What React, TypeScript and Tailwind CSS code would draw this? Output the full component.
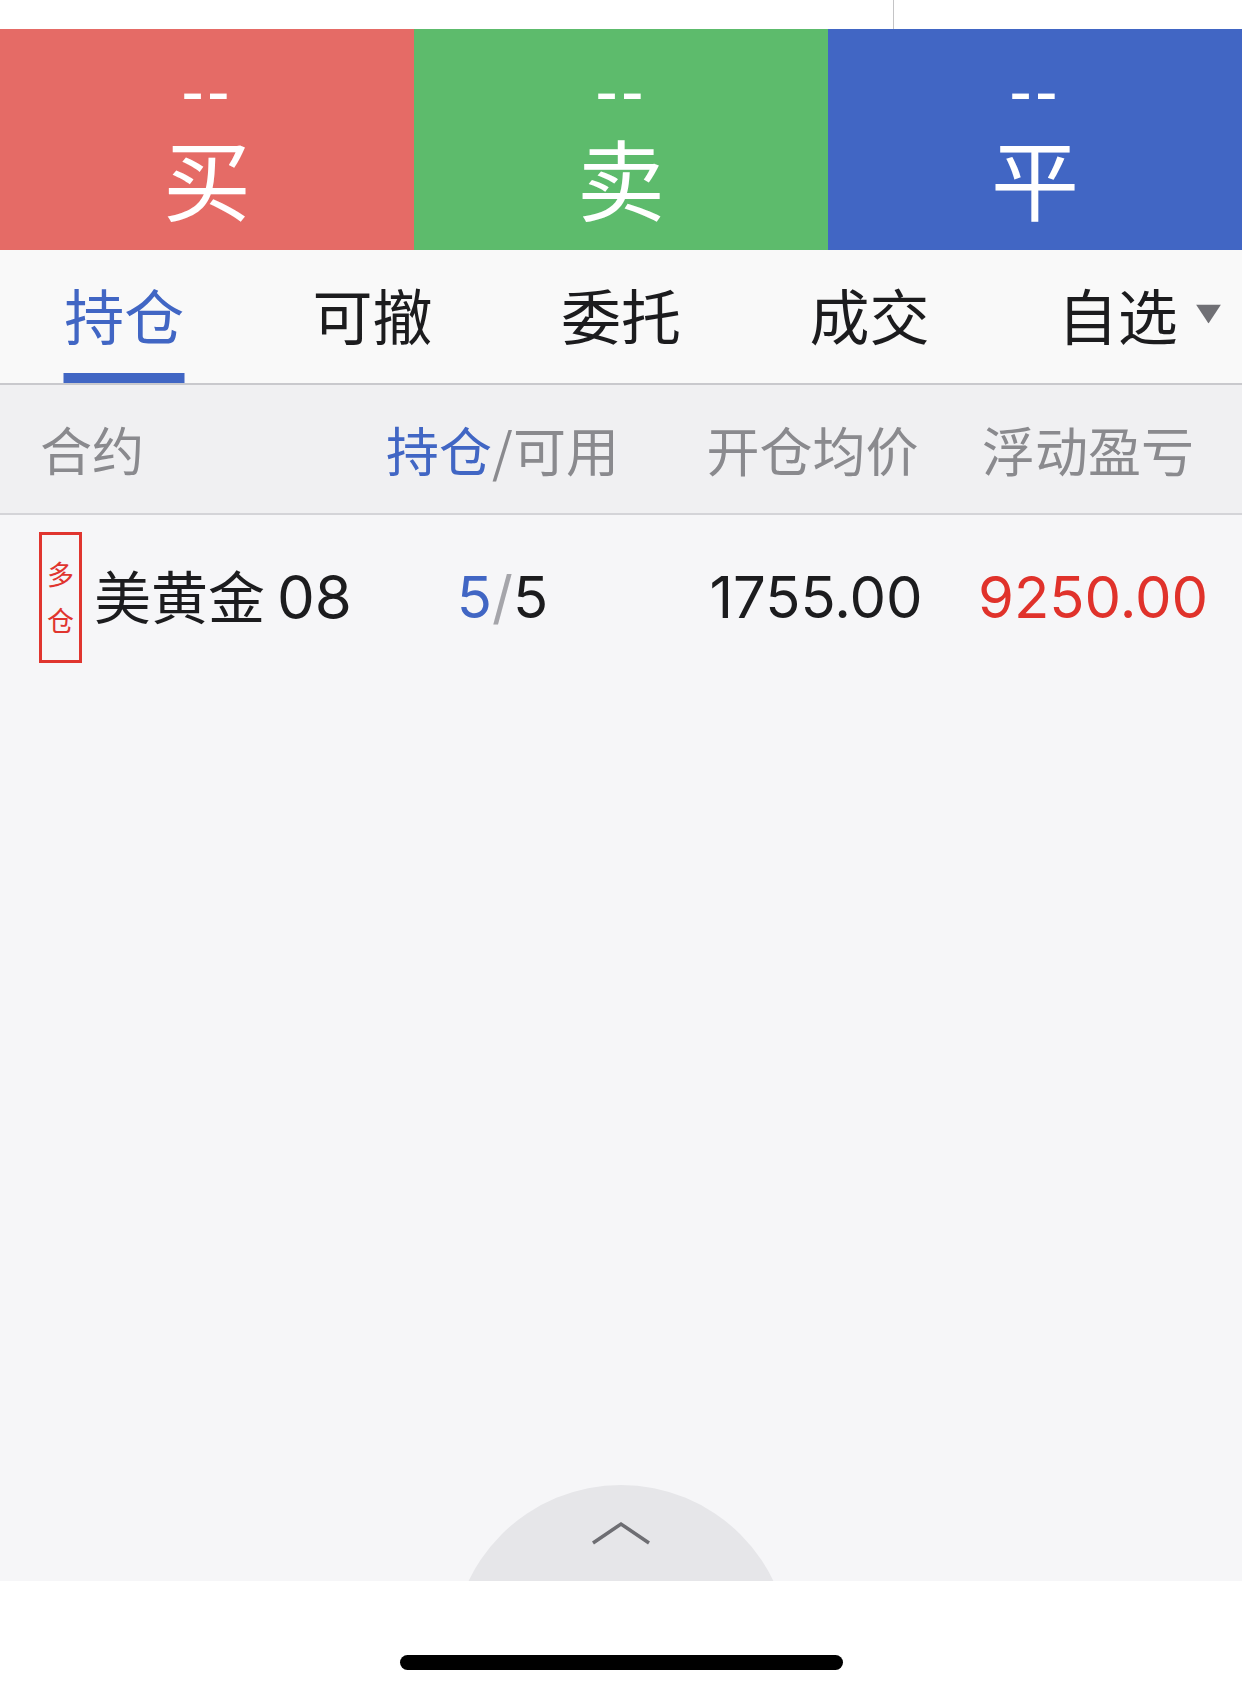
import React from "react";

const CJK = { fontFamily: '"Noto Sans CJK SC", "Noto Sans", sans-serif' };
const MIX = { fontFamily: 'Inter, "Noto Sans CJK SC", sans-serif' };

function ActionCell({ bg, label }: { bg: string; label: string }) {
  return (
    <div className={`flex flex-col items-center pt-[42px] ${bg}`}>
      <div
        className="text-white text-[68px] leading-[40px] h-[40px] tracking-[3px]"
        style={{ fontFamily: '"Liberation Sans", Arial, sans-serif' }}
      >
        --
      </div>
      <div className="text-white text-[88px] leading-none mt-[21px]" style={CJK}>
        {label}
      </div>
    </div>
  );
}

export default function App() {
  const tabs = ["持仓", "可撤", "委托", "成交", "自选"];
  return (
    <div className="w-[1242px] h-[1693px] flex flex-col bg-white overflow-hidden" style={CJK}>
      {/* status strip */}
      <div className="h-[29px] flex bg-white shrink-0">
        <div className="w-[893px]" />
        <div className="w-px bg-[#C4C4C6]" />
      </div>

      {/* action buttons */}
      <div className="grid grid-cols-3 h-[221px] shrink-0">
        <ActionCell bg="bg-[#E56B66]" label="买" />
        <ActionCell bg="bg-[#5DBB6C]" label="卖" />
        <ActionCell bg="bg-[#4166C4]" label="平" />
      </div>

      {/* tabs */}
      <div className="grid grid-cols-5 h-[133px] bg-[#F9F9F9] shrink-0">
        {tabs.map((t, i) => (
          <div key={t} className="relative flex items-center justify-center pb-[5px]">
            <span
              className={`relative text-[60px] leading-none ${
                i === 0 ? "text-[#4166C4]" : "text-[#1C1C1E]"
              }`}
            >
              {t}
              {i === 4 && (
                <svg
                  className="absolute left-full ml-[18px] top-1/2 -translate-y-1/2"
                  width="25"
                  height="19"
                  viewBox="0 0 25 19"
                >
                  <polygon points="0,0 25,0 12.5,19" fill="#707075" />
                </svg>
              )}
            </span>
            {i === 0 && (
              <div className="absolute bottom-0 left-1/2 -translate-x-1/2 w-[121px] h-[10px] bg-[#4166C4]" />
            )}
          </div>
        ))}
      </div>
      <div className="h-[2px] bg-[#C9C9CD] shrink-0" />

      {/* header */}
      <div className="grid grid-cols-[360px_285px_335px_216px] h-[128px] items-center bg-[#F0F0F2] text-[53px] leading-none text-[#8A8A8E] shrink-0">
        <div className="pl-[40px] text-[52px]">合约</div>
        <div className="text-center">
          <span className="text-[#4166C4]">持仓</span>/可用
        </div>
        <div className="text-center">开仓均价</div>
        <div className="text-center">浮动盈亏</div>
      </div>
      <div className="h-[2px] bg-[#D4D4D8] shrink-0" />

      {/* content */}
      <div className="relative flex-1 bg-[#F6F6F8] overflow-hidden">
        <div className="grid grid-cols-[360px_285px_333px_264px] h-[164px] items-center">
          <div className="flex items-center pl-[39px] gap-[12px]">
            <div className="w-[43px] h-[131px] border-[3px] border-[#E0352F] flex flex-col items-center justify-center text-[#E0352F] text-[27px] leading-[46px]">
              <span>多</span>
              <span>仓</span>
            </div>
            <span className="text-[57px] leading-none text-[#1C1C1E]" style={MIX}>
              美黄金<span className="ml-[12px] text-[60px]">08</span>
            </span>
          </div>
          <div className="text-center text-[58px] leading-none" style={MIX}>
            <span className="text-[#4166C4]">5</span>
            <span className="text-[#A5A5AA]">/</span>
            <span className="text-[#1C1C1E]">5</span>
          </div>
          <div className="text-center pl-[9px] text-[58px] leading-none text-[#1C1C1E]" style={MIX}>
            1755.00
          </div>
          <div className="text-left text-[58px] leading-none text-[#E0322B]" style={MIX}>
            9250.00
          </div>
        </div>

        {/* pull-up handle */}
        <div className="absolute left-1/2 -translate-x-1/2 top-[970px] w-[338px] h-[338px] rounded-full bg-[#E6E6E9]" />
        <svg
          className="absolute left-[591px] top-[1006px]"
          width="60"
          height="24"
          viewBox="0 0 60 24"
        >
          <polyline
            points="2,22 30,3 58,22"
            fill="none"
            stroke="#6E6E73"
            strokeWidth="3.5"
          />
        </svg>
      </div>

      {/* home indicator area */}
      <div className="h-[112px] bg-white flex justify-center shrink-0">
        <div className="mt-[74px] w-[443px] h-[15px] rounded-full bg-black" />
      </div>
    </div>
  );
}
